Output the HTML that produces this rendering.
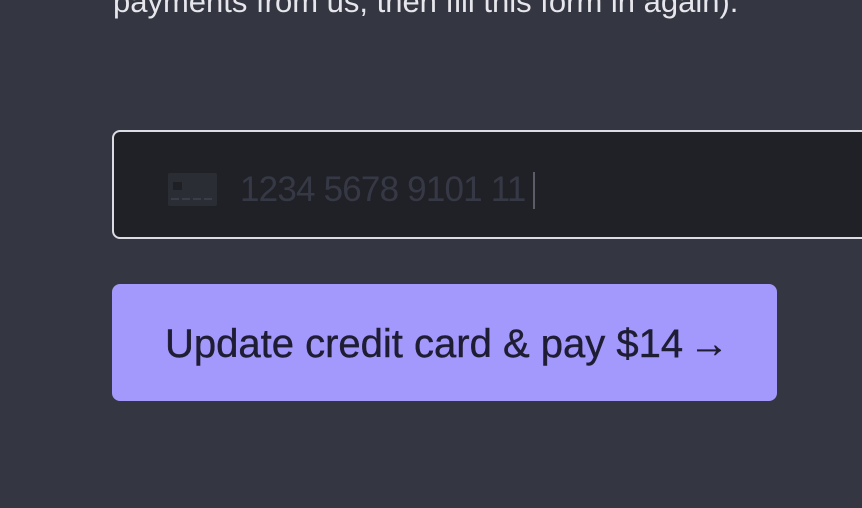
<!DOCTYPE html>
<html><head><style>
html,body{margin:0;padding:0;width:862px;height:508px;overflow:hidden;background:#343741;font-family:"Liberation Sans",sans-serif;}
.t{position:absolute;left:113px;top:-17px;font-size:31px;color:#e6e6ec;white-space:nowrap;line-height:38px;}
.inp{position:absolute;left:112px;top:130px;width:780px;height:105px;background:#202126;border:2px solid #dcdce4;border-radius:8px;box-sizing:content-box;}
.card{position:absolute;left:168px;top:173px;width:49px;height:33px;background:#2b2d35;border-radius:2px;}
.chip{position:absolute;left:5px;top:9px;width:9px;height:8px;background:#1f2026;}
.dash{position:absolute;top:25px;height:2px;width:8px;background:#3a3d48;}
.num{position:absolute;left:240px;top:170px;font-size:35px;color:#363945;letter-spacing:-0.8px;line-height:40px;white-space:nowrap;}
.caret{position:absolute;left:533px;top:172px;width:2px;height:37px;background:#5a5d68;}
.btn{position:absolute;left:112px;top:284px;width:665px;height:117px;background:#a398fb;border-radius:8px;}
.bt{position:absolute;left:165px;top:321px;font-size:40px;color:#1f1d33;white-space:nowrap;line-height:46px;-webkit-text-stroke:0.4px #1f1d33;}
</style></head><body>
<div class="t">payments from us, then fill this form in again).</div>
<div class="inp"></div>
<div class="card"><div class="chip"></div><div class="dash" style="left:3px"></div><div class="dash" style="left:14px"></div><div class="dash" style="left:25px"></div><div class="dash" style="left:36px"></div></div>
<div class="num">1234 5678 9101 11</div>
<div class="caret"></div>
<div class="btn"></div>
<div class="bt">Update credit card &amp; pay $14<span style="margin-left:6px">→</span></div>
</body></html>
